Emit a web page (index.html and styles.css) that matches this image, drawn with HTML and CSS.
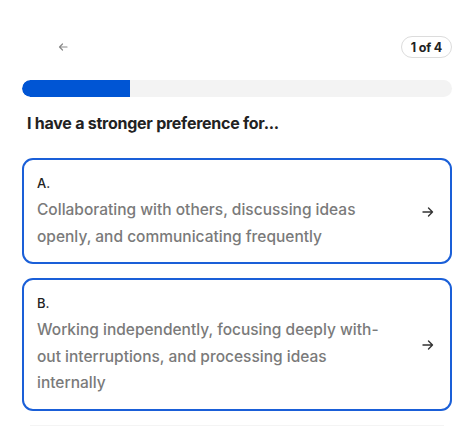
FILE: index.html
```html
<!DOCTYPE html>
<html lang="en">
<head>
<meta charset="utf-8">
<link rel="stylesheet" href="styles.css">
</head>
<body>
<div class="page">
  <header class="topbar">
    <button class="back" aria-label="Back">
      <svg width="10" height="10" viewBox="0 0 10 10"><path d="M9 5H1.5M4.5 2L1.5 5L4.5 8" fill="none" stroke="#8a8a8a" stroke-width="1.2" stroke-linecap="round" stroke-linejoin="round"/></svg>
    </button>
    <span class="badge">1 of 4</span>
  </header>
  <div class="progress"><div class="progress-fill" style="width:25%"></div></div>
  <h1 class="question">I have a stronger preference for...</h1>
  <div class="options">
    <button class="option">
      <div class="option-body">
        <div class="option-label">A.</div>
        <div class="option-text">Collaborating with others, discussing ideas openly, and communicating frequently</div>
      </div>
      <svg class="option-arrow" width="12" height="12" viewBox="0 0 12 12"><path d="M1 6H10.5M6.5 2L10.5 6L6.5 10" fill="none" stroke="#333" stroke-width="1.4" stroke-linecap="round" stroke-linejoin="round"/></svg>
    </button>
    <button class="option">
      <div class="option-body">
        <div class="option-label">B.</div>
        <div class="option-text">Working independently, focusing deeply with-<br>out interruptions, and processing ideas internally</div>
      </div>
      <svg class="option-arrow" width="12" height="12" viewBox="0 0 12 12"><path d="M1 6H10.5M6.5 2L10.5 6L6.5 10" fill="none" stroke="#333" stroke-width="1.4" stroke-linecap="round" stroke-linejoin="round"/></svg>
    </button>
  </div>
  <div class="footer-line"></div>
</div>
</body>
</html>
```

FILE: styles.css
```css
* { box-sizing: border-box; }
html, body { margin: 0; padding: 0; background: #fff; }
body { font-family: "Inter", "Noto Sans", sans-serif; color: #222; }
.page { padding: 36px 23px 0 22px; }
.topbar { display: flex; align-items: center; justify-content: space-between; height: 22px; }
.back { background: none; border: 0; padding: 0; margin-left: 36px; width: 10px; height: 10px; display: flex; align-items: center; justify-content: center; }
.badge { font-size: 12.5px; font-weight: 700; letter-spacing: -0.2px; border: 1px solid #dcdcdc; border-radius: 11px; height: 22px; padding: 0 9px; display: flex; align-items: center; color: #222; }
.progress { margin-top: 22px; height: 17px; background: #f3f3f3; border-radius: 9px; overflow: hidden; }
.progress-fill { height: 100%; background: #0055d4; border-radius: 9px 0 0 9px; }
.question { font-size: 16px; font-weight: 700; margin: 16px 0 0 5px; letter-spacing: -0.25px; line-height: 20px; color: #222; }
.options { margin-top: 25px; display: flex; flex-direction: column; gap: 14px; }
.option { display: flex; align-items: center; width: 100%; text-align: left; background: #fff; border: 2px solid #1a5fd8; border-radius: 11px; padding: 13px 16px 12px 13px; font-family: inherit; cursor: pointer; }
.option-body { flex: 1; min-width: 0; }
.option-label { font-size: 13px; line-height: 20px; color: #222; font-weight: 500; margin-bottom: 4px; }
.option-text { font-size: 15.5px; font-weight: 500; line-height: 26.5px; color: #7a7a7a; width: 360px; }
.option-arrow { flex: none; margin-right: 0; }
.footer-line { margin: 14px 8px 0; height: 1px; background: #f4f4f4; }
```
